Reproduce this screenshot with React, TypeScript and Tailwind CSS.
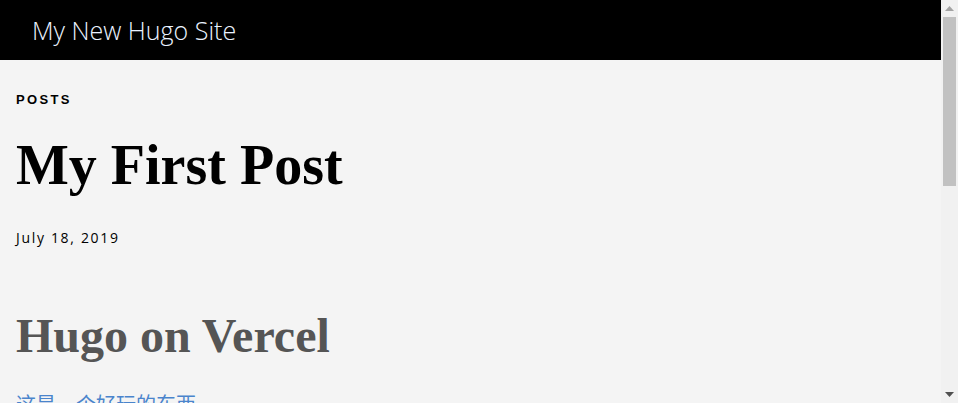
const serif = { fontFamily: '"Liberation Serif", "Times New Roman", serif' }

function Scrollbar() {
  return (
    <aside className="w-[17px] shrink-0 bg-[#f1f1f1] flex flex-col items-center">
      <div className="h-[17px] flex items-center justify-center">
        <svg width="9" height="5" viewBox="0 0 9 5">
          <path d="M0 5 L4.5 0 L9 5 Z" fill="#a3a3a3" />
        </svg>
      </div>
      <div className="w-[13px] h-[169px] bg-[#c1c1c1]" />
      <div className="flex-1" />
      <div className="h-[17px] flex items-center justify-center">
        <svg width="9" height="5" viewBox="0 0 9 5">
          <path d="M0 0 L9 0 L4.5 5 Z" fill="#505050" />
        </svg>
      </div>
    </aside>
  )
}

export default function App() {
  return (
    <div className="h-[403px] flex overflow-hidden bg-[#f4f4f4] text-black">
      <div className="flex-1 min-w-0">
        <header className="h-[60px] bg-black flex items-center px-[32px]">
          <span className="text-[25px] font-light text-[#eaf2ff] font-['Open_Sans',sans-serif] leading-none">
            My New Hugo Site
          </span>
        </header>

        <main className="px-4">
          <p className="mt-[32px] text-[13px] leading-[16px] font-bold tracking-[0.18em] uppercase font-['Liberation_Sans',Arial,sans-serif]">
            Posts
          </p>

          <h1 className="mt-[29px] text-[56px] leading-none font-bold" style={serif}>
            My First Post
          </h1>

          <p className="mt-[35px] text-[14px] leading-[20px] tracking-[0.12em] font-['Open_Sans',sans-serif]">
            July 18, 2019
          </p>

          <h2 className="mt-[64px] text-[48px] leading-none font-bold text-[#555555]" style={serif}>
            Hugo on Vercel
          </h2>

          <p className="mt-[30px] text-[20px] leading-[28px] text-[#4a84cc] font-['Noto_Sans_CJK_SC',sans-serif]">
            这是一个好玩的东西
          </p>
        </main>
      </div>
      <Scrollbar />
    </div>
  )
}
